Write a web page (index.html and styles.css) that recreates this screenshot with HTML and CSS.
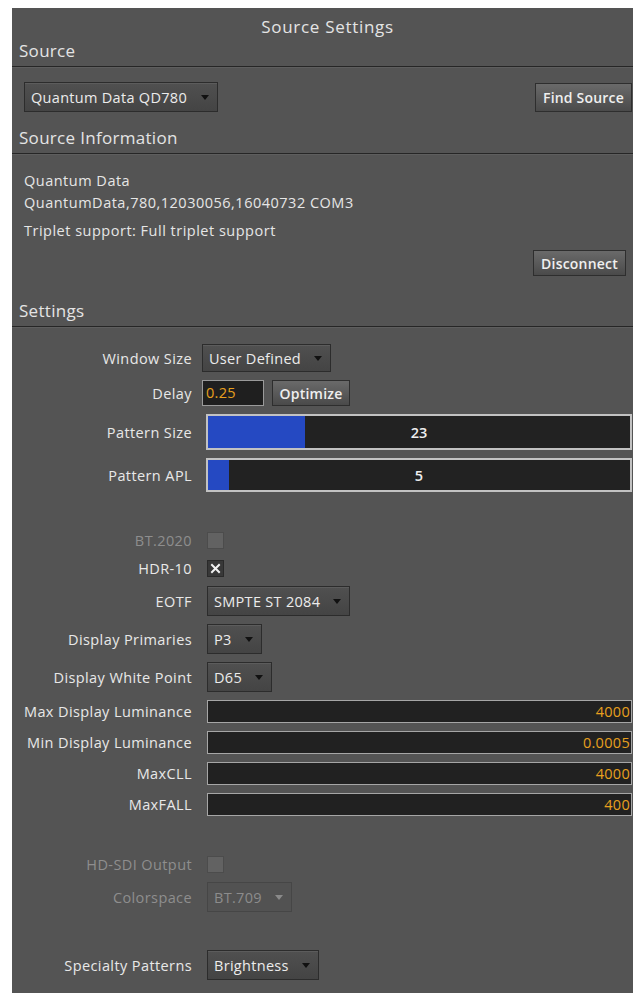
FILE: index.html
```html
<!DOCTYPE html>
<html lang="en">
<head>
<meta charset="utf-8">
<title>Source Settings</title>
<link rel="stylesheet" href="styles.css">
</head>
<body>
<div class="panel">
  <div class="title">Source Settings</div>

  <div class="header">Source</div>
  <div class="source-row">
    <div class="dropdown dd-source">Quantum Data QD780<span class="caret"></span></div>
    <button class="btn btn-find">Find Source</button>
  </div>

  <div class="header header-info">Source Information</div>
  <div class="info">
    <div class="info-line">Quantum Data</div>
    <div class="info-line">QuantumData,780,12030056,16040732 COM3</div>
    <div class="info-line triplet">Triplet support: Full triplet support</div>
    <div class="disc-row"><button class="btn btn-disc">Disconnect</button></div>
  </div>

  <div class="header header-settings">Settings</div>
  <div class="settings">
    <div class="row">
      <div class="label">Window Size</div>
      <div class="dropdown dd-window">User Defined<span class="caret"></span></div>
    </div>
    <div class="row">
      <div class="label">Delay</div>
      <div class="delay-input">0.25</div>
      <button class="btn btn-opt">Optimize</button>
    </div>
    <div class="row">
      <div class="label">Pattern Size</div>
      <div class="slider slider-size">
        <div class="slider-fill" style="width: 23%"></div>
        <div class="slider-value">23</div>
      </div>
    </div>
    <div class="row">
      <div class="label">Pattern APL</div>
      <div class="slider slider-apl">
        <div class="slider-fill" style="width: 5%"></div>
        <div class="slider-value">5</div>
      </div>
    </div>

    <div class="row row-check sep">
      <div class="label disabled">BT.2020</div>
      <div class="check check-off"></div>
    </div>
    <div class="row row-check">
      <div class="label">HDR-10</div>
      <div class="check check-on">
        <svg width="13" height="13" viewBox="0 0 13 13"><path d="M3 3 L10 10 M10 3 L3 10" stroke="#f2f2f2" stroke-width="2" stroke-linecap="square"/></svg>
      </div>
    </div>
    <div class="row">
      <div class="label">EOTF</div>
      <div class="dropdown">SMPTE ST 2084<span class="caret"></span></div>
    </div>
    <div class="row">
      <div class="label">Display Primaries</div>
      <div class="dropdown">P3<span class="caret"></span></div>
    </div>
    <div class="row">
      <div class="label">Display White Point</div>
      <div class="dropdown">D65<span class="caret"></span></div>
    </div>
    <div class="row row-field">
      <div class="label">Max Display Luminance</div>
      <div class="field">4000</div>
    </div>
    <div class="row row-field">
      <div class="label">Min Display Luminance</div>
      <div class="field">0.0005</div>
    </div>
    <div class="row row-field">
      <div class="label">MaxCLL</div>
      <div class="field">4000</div>
    </div>
    <div class="row row-field">
      <div class="label">MaxFALL</div>
      <div class="field">400</div>
    </div>

    <div class="row row-check sep">
      <div class="label disabled">HD-SDI Output</div>
      <div class="check check-off"></div>
    </div>
    <div class="row">
      <div class="label disabled">Colorspace</div>
      <div class="dropdown dropdown-disabled">BT.709<span class="caret"></span></div>
    </div>

    <div class="row sep">
      <div class="label">Specialty Patterns</div>
      <div class="dropdown dd-special">Brightness<span class="caret"></span></div>
    </div>
  </div>
</div>
</body>
</html>
```

FILE: styles.css
```css
html, body {
  background: #ffffff;
}

body {
  margin: 8px 0 0 12px;
  font-family: "Open Sans", "Noto Sans", "Liberation Sans", sans-serif;
  color: #e2e2e2;
}

.panel {
  width: 621px;
  min-height: 985px;
  background: #545454;
  font-size: 14px;
}

/* panel caption */
.title {
  padding-top: 6px;
  padding-left: 10px;
  height: 25px;
  line-height: 25px;
  text-align: center;
  font-size: 17px;
  letter-spacing: 0.7px;
  color: #e4e4e4;
}

/* section headings with a groove underneath */
.header {
  height: 27px;
  line-height: 24px;
  padding-left: 7px;
  font-size: 17px;
  letter-spacing: 0.3px;
  color: #e4e4e4;
  border-bottom: 1px solid #262626;
  box-shadow: 0 1px 0 #5e5e5e;
}

.header-info {
  margin-top: 14px;
}

.header-settings {
  margin-top: 23px;
}

/* source picker row */
.source-row {
  display: flex;
  justify-content: space-between;
  align-items: flex-start;
  padding: 15px 1px 0 12px;
}

/* combo boxes */
.dropdown {
  display: inline-flex;
  align-items: center;
  box-sizing: border-box;
  height: 30px;
  padding: 0 8px 0 6px;
  font-size: 14.5px;
  letter-spacing: 0.3px;
  color: #ececec;
  background: linear-gradient(#505050, #444444);
  border: 1px solid #2c2c2c;
  box-shadow: inset 0 1px 0 #5c5c5c;
  white-space: nowrap;
}

.caret {
  width: 0;
  height: 0;
  margin-left: 13px;
  border-left: 4px solid transparent;
  border-right: 4px solid transparent;
  border-top: 5px solid #111111;
}

.dd-source .caret {
  margin-left: 14px;
}

.dd-window {
  height: 28px;
  margin-left: -5px;
}

.dropdown-disabled {
  color: #8c8c8c;
  background: #525252;
  border-color: #464646;
  box-shadow: none;
}

.dropdown-disabled .caret {
  border-top-color: #8a8a8a;
}

/* push buttons */
.btn {
  box-sizing: border-box;
  font-family: inherit;
  font-size: 14px;
  font-weight: 600;
  letter-spacing: 0.2px;
  color: #efefef;
  background: linear-gradient(#6a6a6a, #4a4a4a);
  border: 1px solid #2e2e2e;
  padding: 0 4px;
  cursor: default;
}

.btn-find {
  height: 29px;
  width: 97px;
  margin-top: 1px;
}

.btn-disc {
  height: 26px;
  width: 93px;
}

.btn-opt {
  height: 26px;
  width: 78px;
  margin-left: 8px;
}

/* source details */
.info {
  padding: 16px 7px 0 12px;
  font-size: 14.5px;
  letter-spacing: 0.5px;
  line-height: 22px;
  color: #e6e6e6;
}

.triplet {
  margin-top: 6px;
}

.disc-row {
  display: flex;
  justify-content: flex-end;
  margin-top: 8px;
  letter-spacing: 0.2px;
}

/* settings form */
.settings {
  display: flex;
  flex-direction: column;
  gap: 8px;
  padding: 17px 1px 0 0;
}

.row {
  display: flex;
  align-items: center;
}

.row.sep {
  margin-top: 30px;
}

.label {
  flex: none;
  width: 180px;
  margin-right: 15px;
  text-align: right;
  font-size: 14.5px;
  letter-spacing: 0.4px;
  color: #e8e8e8;
  white-space: nowrap;
}

.label.disabled {
  color: #8e8e8e;
}

.delay-input {
  box-sizing: border-box;
  width: 62px;
  height: 26px;
  margin-left: -5px;
  padding-left: 3px;
  line-height: 24px;
  font-size: 14.5px;
  letter-spacing: 0.3px;
  color: #e8a01e;
  background: #1f1f1f;
  border: 1px solid #9a9a9a;
}

/* value sliders: fill and number share one cell */
.slider {
  flex: 1;
  display: grid;
  box-sizing: border-box;
  margin-left: -1px;
  background: #222222;
  border: 2px solid #c2c2c2;
}

.slider-size {
  height: 36px;
}

.slider-apl {
  height: 34px;
}

.slider-fill,
.slider-value {
  grid-area: 1 / 1;
}

.slider-fill {
  background: #2549c2;
}

.slider-value {
  align-self: center;
  justify-self: center;
  font-size: 14.5px;
  font-weight: 600;
  color: #eeeeee;
}

/* check boxes */
.row-check {
  height: 20px;
}

.check {
  box-sizing: border-box;
  width: 17px;
  height: 17px;
  display: flex;
  align-items: center;
  justify-content: center;
}

.check-off {
  background: #626262;
  border: 1px solid #4c4c4c;
}

.check-on {
  background: #383838;
  border: 1px solid #2a2a2a;
}

/* numeric entry fields */
.field {
  flex: 1;
  box-sizing: border-box;
  height: 23px;
  line-height: 21px;
  padding-right: 1px;
  text-align: right;
  font-size: 14.5px;
  letter-spacing: 0.3px;
  color: #e8a01e;
  background: #212121;
  border: 1px solid #a6a6a6;
}
```
